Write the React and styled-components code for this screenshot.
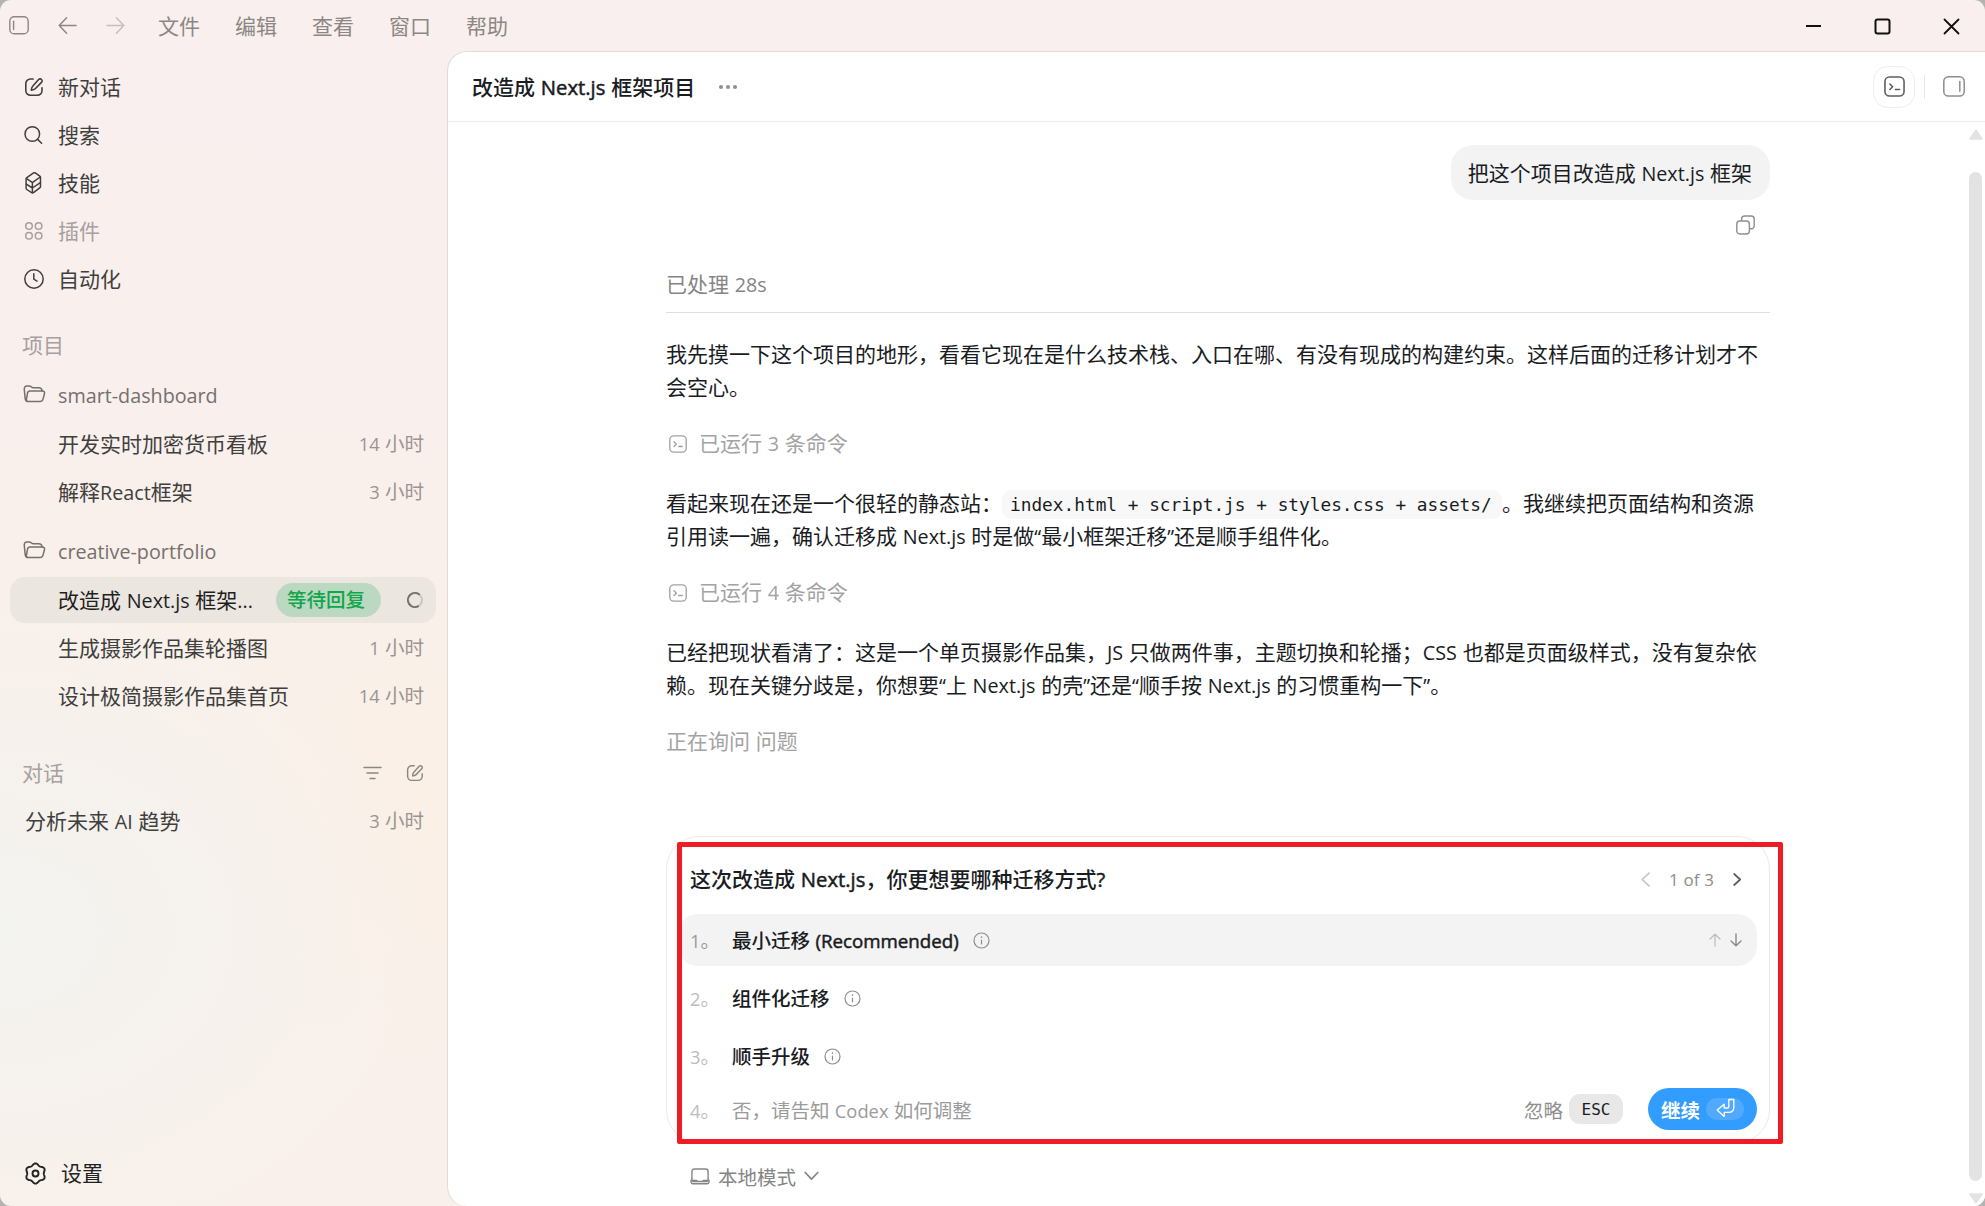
import React from 'react'
import styled, { createGlobalStyle } from 'styled-components'

const GlobalStyle = createGlobalStyle`
* { box-sizing: border-box; }
body {
  margin: 0;
  background: #b4b3b2;
  font-family: 'Open Sans', 'Noto Sans CJK SC', sans-serif;
  font-size: 21px;
  color: #1a1c1f;
}
`
const Window = styled.div`
width: 100%;
height: 1206px;
display: flex;
flex-direction: column;
overflow: hidden;
border-radius: 11px;
background:
  radial-gradient(ellipse 440px 340px at 0 930px, #f3f3ef 0%, rgba(244,242,238,0.7) 45%, rgba(246,241,237,0) 100%),
  radial-gradient(ellipse 260px 260px at 440px 820px, #faf0e6 0%, rgba(250,240,230,0) 100%),
  linear-gradient(180deg, #f9efee 0, #f9efed 340px, #f9f0ea 620px, #f9f0eb 100%);
`
// latin glyphs run wide next to the chinese face, so they are set a bit smaller
const Latin = styled.span`
font-size: 0.94em;
word-spacing: 0.03em;
`
const TitleBar = styled.div`
height: 51px;
flex: none;
display: flex;
align-items: center;
padding: 0 25px 0 9px;
color: #8d8784;
`
const TitleIcons = styled.div`
display: flex;
align-items: center;
gap: 29px;
width: 149px;
`
const Menu = styled.div`
display: flex;
gap: 35px;
flex: 1;
line-height: 30px;
`
const WindowButtons = styled.div`
display: flex;
gap: 52px;
color: #111;
padding-top: 2px;
`
const Body = styled.div`
flex: 1;
display: flex;
min-height: 0;
`
const Sidebar = styled.div`
width: 447px;
flex: none;
padding: 13px 11px 8px 10px;
display: flex;
flex-direction: column;
`
const Row = styled.div`
height: 46px;
flex: none;
display: flex;
align-items: center;
margin-bottom: ${p => p.$after ?? 2}px;
padding: 0 13px 0 ${p => p.$left ?? 48}px;
border-radius: 15px;
line-height: 30px;
white-space: nowrap;
color: ${p => p.$color || '#403f3e'};
background: ${p => (p.$active ? '#ebe6e0' : 'transparent')};
`
const RowIcon = styled.span`
width: ${p => p.$width || 34}px;
height: 22px;
flex: none;
display: flex;
align-items: center;
`
const RowText = styled.span`
flex: 1;
`
const FolderName = styled.span`
padding-top: 2px;
`
const Time = styled.span`
font-size: 19.5px;
color: #9b9592;
margin-right: -1px;
`
const Badge = styled.span`
height: 34px;
width: 105px;
border-radius: 17px;
background: #bbd8c1;
color: #10a64a;
font-size: 19.5px;
font-weight: 500;
line-height: 34px;
padding-left: 11px;
margin-right: 26px;
`
const RowTools = styled.span`
display: flex;
align-items: center;
gap: 24px;
color: #8d8784;
margin-right: -1px;
`
const Spacer = styled.div`
flex: 1;
`
const Main = styled.div`
flex: 1;
min-width: 0;
display: flex;
flex-direction: column;
background: #fff;
border: 1px solid #e4dad9;
border-right: none;
border-bottom: none;
border-radius: 20px 0 0 20px;
`
const Header = styled.div`
height: 70px;
flex: none;
display: flex;
align-items: center;
padding: 0 20px 0 24px;
border-bottom: 1px solid #ececec;
`
const Title = styled.div`
font-weight: 500;
line-height: 30px;
margin-right: 23px;
${Latin} {
  font-size: 0.965em;
  -webkit-text-stroke: 0.5px currentColor;
}
`
const SquareButton = styled.div`
width: 42px;
height: 42px;
border: 1px solid #eeeeee;
border-radius: 15px;
display: flex;
align-items: center;
justify-content: center;
color: #5c5d5f;
`
const Divider = styled.div`
width: 1px;
height: 24px;
background: #e8e8e8;
margin: 0 18px 0 9px;
`
const Content = styled.div`
flex: 1;
display: flex;
min-height: 0;
`
const Column = styled.div`
width: 1104px;
margin-left: 218px;
display: flex;
flex-direction: column;
`
const Bubble = styled.div`
align-self: flex-end;
height: 55px;
margin-top: 23px;
padding: 0 18px 0 17px;
border-radius: 22px;
background: #f3f3f3;
line-height: 56px;
`
const CopyRow = styled.div`
align-self: flex-end;
height: 19px;
margin: 15px 15px 0 0;
display: flex;
color: #8e8e8e;
`
const Processed = styled.div`
margin-top: 34px;
padding-bottom: 11px;
height: 45px;
border-bottom: 1px solid #dfdfdf;
color: #858585;
line-height: 33px;
`
const Paragraph = styled.p`
margin: ${p => p.$top}px 0 0;
line-height: 33px;
white-space: nowrap;
`
const Line = styled.span`
display: block;
height: 33px;
`
const Code = styled.code`
display: inline-block;
height: 29px;
width: 500px;
padding: 0 8px;
border-radius: 9px;
background: #f8f8f8;
font-family: 'DejaVu Sans Mono', monospace;
font-size: 17.8px;
line-height: 29px;
vertical-align: baseline;
`
const Command = styled.div`
height: 33px;
margin-top: ${p => p.$top}px;
display: flex;
align-items: center;
gap: 12px;
padding-left: ${p => (p.$plain ? 0 : 3)}px;
color: #a3a3a3;
line-height: 33px;
`
const Card = styled.div`
position: relative;
height: 307px;
margin-top: 78px;
padding: 27px 12px 0 11px;
border: 1px solid #ebebeb;
border-radius: 33px;
`
const Highlight = styled.div`
position: absolute;
left: 10px;
top: 5px;
width: 1106px;
height: 302px;
border: 5px solid #ee1c24;
border-radius: 2px;
`
const Question = styled.div`
height: 30px;
display: flex;
align-items: center;
padding: 0 15px 0 12px;
margin-bottom: 20px;
line-height: 30px;
font-weight: 500;
`
const QuestionText = styled.span`
${Latin} {
  font-size: 0.965em;
  -webkit-text-stroke: 0.5px currentColor;
}
`
const Pager = styled.div`
display: flex;
align-items: center;
margin-left: auto;
font-size: 18px;
font-weight: 400;
color: #8c8c8c;
gap: 19px;
`
const Option = styled.div`
height: 52px;
display: flex;
align-items: center;
margin-bottom: ${p => (p.$last ? 0 : 6)}px;
padding: 0 15px ${p => (p.$last ? 0 : 2)}px 12px;
border-radius: 20px;
font-size: 19.5px;
font-weight: ${p => (p.$last ? 400 : 500)};
color: ${p => (p.$last ? '#9b9b9b' : '#1a1c1f')};
background: ${p => (p.$active ? '#f3f3f3' : 'transparent')};
`
const OptionLabel = styled.span`
${Latin} {
  font-size: 0.96em;
  -webkit-text-stroke: 0.5px currentColor;
}
`
const Num = styled.span`
width: 42px;
font-weight: 400;
color: ${p => (p.$active ? '#9a9a9a' : '#bcbcbc')};
`
const Info = styled.span`
display: flex;
margin-left: 14px;
padding-top: 2px;
color: #8e8e8e;
`
const Arrows = styled.span`
display: flex;
gap: 9px;
margin-left: auto;
padding-top: 2px;
color: #8a8a8a;
`
const LastRow = styled.div`
display: flex;
align-items: center;
height: 42px;
`
const Skip = styled.span`
font-size: 19.5px;
color: #8e8e8e;
margin-left: auto;
`
const Key = styled.span`
width: 54px;
height: 30px;
margin: 0 25px 0 6px;
border-radius: 11px;
background: #e8e8e8;
font-family: 'DejaVu Sans Mono', monospace;
font-size: 16px;
line-height: 31px;
text-align: center;
`
const Continue = styled.span`
width: 109px;
height: 42px;
border-radius: 21px;
background: #339cff;
color: #fff;
font-size: 19.5px;
font-weight: 700;
display: flex;
align-items: center;
padding-left: 13px;
gap: 6px;
`
const EnterPill = styled.span`
width: 38px;
height: 22px;
border-radius: 11px;
background: rgba(255, 255, 255, 0.15);
display: flex;
justify-content: center;
`
const Mode = styled.div`
display: flex;
align-items: center;
height: 30px;
margin: 18px 0 0 24px;
gap: 8px;
font-size: 19.5px;
color: #858585;
`
const Scrollbar = styled.div`
width: 16px;
margin-left: auto;
display: flex;
flex-direction: column;
align-items: center;
padding: 7px 3px 2px 0;
`
const Thumb = styled.div`
width: 13px;
height: 1010px;
margin: 32px 0 12px;
border-radius: 7px;
background: #e3e3e3;
`

const Svg = ({ w = 20, h = 20, box, sw = 1.5, children, ...rest }) => (
  <svg width={w} height={h} viewBox={box || `0 0 ${w} ${h}`} fill="none" stroke="currentColor"
    strokeWidth={sw} strokeLinecap="round" strokeLinejoin="round" {...rest}>
    {children}
  </svg>
)

const Compose = ({ size = 20 }) => (
  <Svg w={size} h={size} box="0 0 20 20" sw={1.6}>
    <path d="M9.2 2H6.4A4.6 4.6 0 0 0 1.8 6.600v7A4.600 4.600 0 0 0 6.400 18.200h7A4.600 4.600 0 0 0 18 13.600v-2.800" />
    <path d="M14.600 2.500a2 2 0 0 1 2.900 0 2 2 0 0 1 0 2.900l-6.300 6.400c-.9.9-2.1 1.200-3.900 1.400.2-1.800.5-3.100 1.400-4z" />
  </Svg>
)
const Search = () => (
  <Svg><circle cx="8.3" cy="9" r="7.3" /><path d="M13.600 14.400l4 3.800" /></Svg>
)
const Skills = () => (
  <Svg w={20} h={22}>
    <path d="M9.600.9a1.600 1.600 0 0 1 1.600 0l4.600 3.200a1.600 1.600 0 0 1 .7 1.300v9a1.600 1.600 0 0 1-.8 1.400l-6.200 4.800a1.800 1.800 0 0 1-1.900.1l-4.800-3.200a1.600 1.600 0 0 1-.7-1.300V7a1.600 1.600 0 0 1 .7-1.400z" />
    <path d="M2.600 6.600l5.200 3.600a1 1 0 0 0 1.200 0L16.300 5M8.400 10.600v9.800M2.400 12.200l6 3.800 8-5.400" />
  </Svg>
)
const Plugins = () => (
  <Svg>
    <circle cx="5" cy="5" r="3.3" /><circle cx="14.6" cy="5" r="3.3" />
    <circle cx="5" cy="14.8" r="3.3" /><circle cx="14.6" cy="14.8" r="3.3" />
  </Svg>
)
const Clock = () => (
  <Svg w={20} h={20} box="1 1 20 20"><circle cx="11" cy="11" r="9.2" /><path d="M10.800 5.800v5.400l3.200 2" /></Svg>
)
const Folder = () => (
  <Svg w={23} h={20}>
    <path d="M4.200 17.500c-1.300-.3-1.900-1.600-2.100-3.600L1.300 5.600C1.100 3.400 2 1.900 4 1.900h2.400c1.600 0 2 1.900 3.800 1.900h5.600c2 0 3 .8 3.300 3" />
    <path d="M6.900 7h12.500c1.700 0 2.500.9 2.100 2.500l-1.500 5.600c-.4 1.600-1.300 2.400-3 2.400H5.200c-1.500 0-2-.9-1.700-2.400l1-5.900C4.800 7.700 5.500 7 6.900 7z" />
  </Svg>
)
// six soft lobes around the centre
const gear = Array.from({ length: 73 }, (_, i) => {
  const a = (i * Math.PI) / 36
  const r = 9.2 - 0.95 * Math.cos(6 * a)
  return `${i ? 'L' : 'M'}${(11.5 + r * Math.cos(a)).toFixed(2)} ${(11.5 + r * Math.sin(a)).toFixed(2)}`
}).join('')
const Gear = () => (
  <Svg w={23} h={23} sw={1.9}><path d={gear + 'Z'} /><circle cx="11.5" cy="11.5" r="3" /></Svg>
)
const Panel = () => (
  <Svg w={20} h={19} sw={1.4}>
    <rect x=".8" y=".8" width="18.4" height="17" rx="4.4" />
    <path d="M4.600 5.200v8.400" />
  </Svg>
)
const Terminal = ({ size = 20 }) => (
  <Svg w={size} h={size} box="0 0 20 20">
    <rect x=".9" y=".9" width="18.2" height="18.2" rx="4.4" />
    <path d="M5.600 7.600l2.600 2.600-2.600 2.600M10.800 12.800h4" />
  </Svg>
)
const InfoIcon = () => (
  <Svg w={17} h={17} sw={1.2}>
    <circle cx="8.5" cy="8.5" r="7.5" /><path d="M8.500 8v4" /><path d="M8.500 5.100v.2" strokeWidth="1.6" />
  </Svg>
)

// wraps every latin run of a mixed string
const mix = text =>
  text.split(/([\x20-\x7e“”]+)/).map((part, i) => (i % 2 ? <Latin key={i}>{part}</Latin> : part))

const chats = {
  dashboard: [
    { name: '开发实时加密货币看板', time: '14 小时' },
    { name: '解释React框架', time: '3 小时' },
  ],
  portfolio: [
    { name: '生成摄影作品集轮播图', time: '1 小时' },
    { name: '设计极简摄影作品集首页', time: '14 小时' },
  ],
}

const nav = [
  { name: '新对话', icon: <Compose /> },
  { name: '搜索', icon: <Search /> },
  { name: '技能', icon: <Skills /> },
  { name: '插件', icon: <Plugins />, color: '#a7a09e' },
  { name: '自动化', icon: <Clock />, after: 20 },
]

const ChatRow = ({ chat, after, left }) => (
  <Row $after={after} $left={left}>
    <RowText>{mix(chat.name)}</RowText>
    <Time>{mix(chat.time)}</Time>
  </Row>
)

const FolderRow = ({ name, after }) => (
  <Row $left={13} $color="#75706e" $after={after}>
    <RowIcon $width={35}><Folder /></RowIcon>
    <FolderName>{mix(name)}</FolderName>
  </Row>
)

const App = () => {
  return (
    <Window>
      <GlobalStyle />
      <TitleBar>
        <TitleIcons>
          <Panel />
          <Svg w={19} h={19}><path d="M18 9.500H1.200M8.600 1.800L1.200 9.500l7.400 7.700" /></Svg>
          <Svg w={19} h={19} opacity=".45"><path d="M1 9.500h16.800M10.400 1.800l7.400 7.700-7.400 7.700" /></Svg>
        </TitleIcons>
        <Menu>
          {['文件', '编辑', '查看', '窗口', '帮助'].map(m => <span key={m}>{m}</span>)}
        </Menu>
        <WindowButtons>
          <Svg w={17} h={17} sw={2}><path d="M1 8h15" strokeLinecap="butt" /></Svg>
          <Svg w={17} h={17} sw={2}><rect x="1.500" y="1.500" width="14" height="14" rx="2" /></Svg>
          <Svg w={17} h={17} sw={1.8}><path d="M1.500 1.500l14 14M15.500 1.500l-14 14" /></Svg>
        </WindowButtons>
      </TitleBar>
      <Body>
        <Sidebar>
          {nav.map(n => (
            <Row key={n.name} $left={14} $color={n.color} $after={n.after}>
              <RowIcon>{n.icon}</RowIcon>
              <RowText>{n.name}</RowText>
            </Row>
          ))}
          <Row $left={12} $color="#a7a09e" $after={3}>项目</Row>
          <FolderRow name="smart-dashboard" after={4} />
          <ChatRow chat={chats.dashboard[0]} />
          <ChatRow chat={chats.dashboard[1]} after={12} />
          <FolderRow name="creative-portfolio" after={4} />
          <Row $active $color="#1f1f1f">
            <RowText>{mix('改造成 Next.js 框架...')}</RowText>
            <Badge>等待回复</Badge>
            <Svg w={16} h={16} sw={2}>
              <circle cx="8" cy="8" r="7" stroke="#cbc6c1" />
              <path d="M12 2.300A7 7 0 1 0 11 14.300" stroke="#77736f" />
            </Svg>
          </Row>
          <ChatRow chat={chats.portfolio[0]} />
          <ChatRow chat={chats.portfolio[1]} after={31} />
          <Row $left={12} $color="#a7a09e" $after={2}>
            <RowText>对话</RowText>
            <RowTools>
              <Svg w={19} h={14}><path d="M1 1.500h17M4 7h11M7 12.500h5" /></Svg>
              <Compose size={18} />
            </RowTools>
          </Row>
          <ChatRow chat={{ name: '分析未来 AI 趋势', time: '3 小时' }} left={15} />
          <Spacer />
          <Row $left={14} $color="#222">
            <RowIcon $width={37}><Gear /></RowIcon>
            设置
          </Row>
        </Sidebar>
        <Main>
          <Header>
            <Title>{mix('改造成 Next.js 框架项目')}</Title>
            <Svg w={20} h={6} sw={0} fill="#8e8e8e">
              <circle cx="3" cy="3" r="2" /><circle cx="10" cy="3" r="2" /><circle cx="17" cy="3" r="2" />
            </Svg>
            <Spacer />
            <SquareButton><Terminal size={21} /></SquareButton>
            <Divider />
            <Svg w={22} h={21} sw={1.5} color="#8e8e8e">
              <rect x=".8" y=".8" width="20.400" height="19.200" rx="4.600" /><path d="M16.800 5.500v9.800" />
            </Svg>
          </Header>
          <Content>
            <Column>
              <Bubble>{mix('把这个项目改造成 Next.js 框架')}</Bubble>
              <CopyRow>
                <Svg w={19} h={20} sw={1.4}>
                  <rect x=".8" y="6" width="12.600" height="13" rx="3" />
                  <path d="M5.600 5.800V4A3 3 0 0 1 8.600 1h6.600a3 3 0 0 1 3 3v6.800a3 3 0 0 1-3 3h-1.600" />
                </Svg>
              </CopyRow>
              <Processed>{mix('已处理 28s')}</Processed>
              <Paragraph $top={25}>
                <Line>我先摸一下这个项目的地形，看看它现在是什么技术栈、入口在哪、有没有现成的构建约束。这样后面的迁移计划才不</Line>
                <Line>会空心。</Line>
              </Paragraph>
              <Command $top={23}><Terminal size={18} /><span>{mix('已运行 3 条命令')}</span></Command>
              <Paragraph $top={27}>
                <Line>看起来现在还是一个很轻的静态站：<Code>index.html + script.js + styles.css + assets/</Code>。我继续把页面结构和资源</Line>
                <Line>{mix('引用读一遍，确认迁移成 Next.js 时是做“最小框架迁移”还是顺手组件化。')}</Line>
              </Paragraph>
              <Command $top={23}><Terminal size={18} /><span>{mix('已运行 4 条命令')}</span></Command>
              <Paragraph $top={27}>
                <Line>{mix('已经把现状看清了：这是一个单页摄影作品集，JS 只做两件事，主题切换和轮播；CSS 也都是页面级样式，没有复杂依')}</Line>
                <Line>{mix('赖。现在关键分歧是，你想要“上 Next.js 的壳”还是“顺手按 Next.js 的习惯重构一下”。')}</Line>
              </Paragraph>
              <Command $top={23} $plain><span>{mix('正在询问 问题')}</span></Command>
              <Card>
                <Question>
                  <QuestionText>{mix('这次改造成 Next.js，你更想要哪种迁移方式?')}</QuestionText>
                  <Pager>
                    <Svg w={9} h={15} opacity=".5" sw={1.7}><path d="M8 1.200L1.200 7.500 8 13.800" /></Svg>
                    <span>{mix('1 of 3')}</span>
                    <Svg w={9} h={13} sw={1.7} color="#5c5c5c"><path d="M1.200 1l6 5.500-6 5.500" /></Svg>
                  </Pager>
                </Question>
                <Option $active>
                  <Num $active>{mix('1。')}</Num>
                  <OptionLabel>{mix('最小迁移 (Recommended)')}</OptionLabel>
                  <Info><InfoIcon /></Info>
                  <Arrows>
                    <Svg w={12} h={14} sw={1.3} opacity=".5"><path d="M6 13V1.200M1 6l5-4.800L11 6" /></Svg>
                    <Svg w={12} h={14} sw={1.4}><path d="M6 1v11.800M1 8l5 4.800L11 8" /></Svg>
                  </Arrows>
                </Option>
                <Option>
                  <Num>{mix('2。')}</Num>组件化迁移<Info><InfoIcon /></Info>
                </Option>
                <Option>
                  <Num>{mix('3。')}</Num>顺手升级<Info><InfoIcon /></Info>
                </Option>
                <LastRow>
                  <Option $last>
                    <Num>{mix('4。')}</Num><span>{mix('否，请告知 Codex 如何调整')}</span>
                  </Option>
                  <Skip>忽略</Skip>
                  <Key>ESC</Key>
                  <Continue>
                    继续
                    <EnterPill>
                      <Svg w={19} h={20} sw={1.3}>
                        <path d="M12.800 1.500h5v8.300a4.600 4.600 0 0 1-4.600 4.600H8.200v4L1.200 12l7-5.800V10h3a1.600 1.600 0 0 0 1.600-1.600z" />
                      </Svg>
                    </EnterPill>
                  </Continue>
                </LastRow>
                <Highlight />
              </Card>
              <Mode>
                <Svg w={20} h={17} sw={1.4}>
                  <rect x="1.900" y="1" width="16.200" height="12.600" rx="2.400" /><path d="M1 12.400h5.600l1 1h4.800l1-1H19v1.200a2.200 2.200 0 0 1-2.200 2.200H3.200A2.200 2.200 0 0 1 1 13.600z" />
                </Svg>
                <span>本地模式</span>
                <Svg w={15} h={10} sw={1.7}><path d="M1.200 1.500l6.300 6.700 6.300-6.700" /></Svg>
              </Mode>
            </Column>
            <Scrollbar>
              <Svg w={14} h={11} sw={2} color="#e3e3e3" fill="#e3e3e3"><path d="M7 1.500L12.800 9.800H1.200z" /></Svg>
              <Thumb />
              <Svg w={14} h={11} sw={2} color="#e3e3e3" fill="#e3e3e3"><path d="M7 9.500L1.200 1.200h11.600z" /></Svg>
            </Scrollbar>
          </Content>
        </Main>
      </Body>
    </Window>
  )
}

export default App
